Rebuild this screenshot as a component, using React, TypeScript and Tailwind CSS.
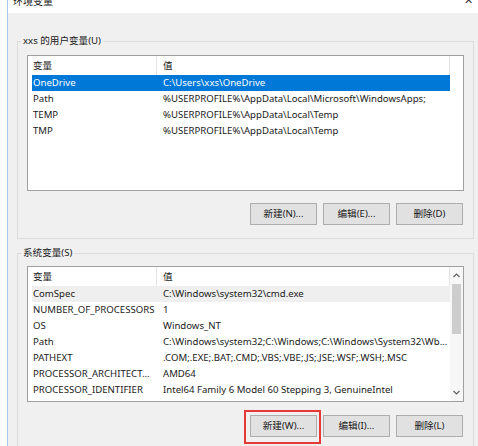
import React from "react";

const FONT = { fontFamily: '"Noto Sans", "Noto Sans CJK SC", sans-serif' };

type Row = { name: string; value: string; state?: "selected" | "hover" };

const userRows: Row[] = [
  { name: "OneDrive", value: "C:\\Users\\xxs\\OneDrive", state: "selected" },
  { name: "Path", value: "%USERPROFILE%\\AppData\\Local\\Microsoft\\WindowsApps;" },
  { name: "TEMP", value: "%USERPROFILE%\\AppData\\Local\\Temp" },
  { name: "TMP", value: "%USERPROFILE%\\AppData\\Local\\Temp" },
];

const sysRows: Row[] = [
  { name: "ComSpec", value: "C:\\Windows\\system32\\cmd.exe", state: "hover" },
  { name: "NUMBER_OF_PROCESSORS", value: "1" },
  { name: "OS", value: "Windows_NT" },
  { name: "Path", value: "C:\\Windows\\system32;C:\\Windows;C:\\Windows\\System32\\Wb..." },
  { name: "PATHEXT", value: ".COM;.EXE;.BAT;.CMD;.VBS;.VBE;.JS;.JSE;.WSF;.WSH;.MSC" },
  { name: "PROCESSOR_ARCHITECT...", value: "AMD64" },
  { name: "PROCESSOR_IDENTIFIER", value: "Intel64 Family 6 Model 60 Stepping 3, GenuineIntel" },
];

function Header() {
  return (
    <div className="flex h-[19px] w-[418px] shrink-0 items-center bg-white text-[#1a1a1a]">
      <div className="h-full w-[125px] shrink-0 border-r border-[#e5e5e5] pl-[1px] leading-[19px]">变量</div>
      <div className="h-full w-[293px] shrink-0 border-r border-[#e5e5e5] pl-[6px] leading-[19px]">值</div>
    </div>
  );
}

function ListRow({ row }: { row: Row }) {
  const bg =
    row.state === "selected"
      ? "bg-[#0078d7] text-white"
      : row.state === "hover"
      ? "bg-[#efefef] text-[#1a1a1a]"
      : "text-[#1a1a1a]";
  return (
    <div className={`flex h-[16px] w-[418px] shrink-0 items-center whitespace-nowrap leading-[16px] ${bg}`}>
      <div className="w-[125px] shrink-0 overflow-hidden pl-[1px]">{row.name}</div>
      <div className="w-[293px] shrink-0 overflow-hidden pl-[6px]">{row.value}</div>
    </div>
  );
}

function Btn({ label }: { label: string }) {
  return (
    <div className="flex h-[22px] w-[67px] items-center justify-center border border-[#adadad] bg-[#e1e1e1] text-[#1a1a1a]">
      {label}
    </div>
  );
}

function Scrollbar() {
  return (
    <div className="flex w-[13px] shrink-0 flex-col items-center bg-[#f7f7f7]">
      <div className="flex h-[17px] w-full items-center justify-center">
        <svg width="7" height="5" viewBox="0 0 7 5">
          <path d="M0.5 4 L3.5 1 L6.5 4" fill="none" stroke="#606060" strokeWidth="1.2" />
        </svg>
      </div>
      <div className="h-[50px] w-[9px] bg-[#cdcdcd]" />
      <div className="flex-1" />
      <div className="flex h-[17px] w-full items-center justify-center">
        <svg width="7" height="5" viewBox="0 0 7 5">
          <path d="M0.5 1 L3.5 4 L6.5 1" fill="none" stroke="#606060" strokeWidth="1.2" />
        </svg>
      </div>
    </div>
  );
}

export default function App() {
  return (
    <div className="flex h-[446px] w-[478px] overflow-hidden bg-white text-[9.6px]" style={FONT}>
      <div className="w-[7px] shrink-0 bg-white" />
      <div className="w-[1px] shrink-0 bg-[#a9c9ec]" />
      <div className="flex flex-1 flex-col">
        {/* title bar */}
        <div className="flex h-[13px] shrink-0 items-start justify-between bg-white pl-[5px] pr-[5px]">
          <div className="mt-[-7px] text-[10px] leading-[16px] text-[#1a1a1a]">环境变量</div>
          <div className="mt-[-8px] text-[11px] leading-[16px] text-[#333]">✕</div>
        </div>
        {/* body */}
        <div className="flex flex-1 flex-col bg-[#f0f0f0] pl-[9px] pt-[20px]">
          {/* user vars */}
          <fieldset className="w-[454px] border border-[#dcdcdc] p-0">
            <legend className="ml-[3px] px-[2px] leading-[16px] text-[#1a1a1a]">xxs 的用户变量(U)</legend>
            <div className="px-[9px] pb-[13px] pt-[6px]">
              <div className="flex h-[136px] w-[437px] flex-col border border-[#a0a0a0] bg-white pl-[4px]">
                <Header />
                {userRows.map((r) => (
                  <ListRow key={r.name} row={r} />
                ))}
              </div>
              <div className="mr-[1px] mt-[12px] flex justify-end gap-[6px]">
                <Btn label="新建(N)..." />
                <Btn label="编辑(E)..." />
                <Btn label="删除(D)" />
              </div>
            </div>
          </fieldset>
          {/* system vars */}
          <fieldset className="mt-[6px] w-[454px] border border-[#dcdcdc] p-0">
            <legend className="ml-[3px] px-[2px] leading-[16px] text-[#1a1a1a]">系统变量(S)</legend>
            <div className="px-[9px] pb-[20px] pt-[5px]">
              <div className="flex h-[136px] w-[437px] border border-[#a0a0a0] bg-white">
                <div className="flex flex-1 flex-col overflow-hidden pl-[4px]">
                  <Header />
                  {sysRows.map((r) => (
                    <ListRow key={r.name + r.value} row={r} />
                  ))}
                </div>
                <Scrollbar />
              </div>
              <div className="mr-[1px] mt-[13px] flex justify-end gap-[6px]">
                <div className="relative">
                  <Btn label="新建(W)..." />
                  <div className="pointer-events-none absolute left-[-6px] top-[-5px] h-[34px] w-[77px] border-2 border-[#e53935]" />
                </div>
                <Btn label="编辑(I)..." />
                <Btn label="删除(L)" />
              </div>
            </div>
          </fieldset>
        </div>
      </div>
    </div>
  );
}
